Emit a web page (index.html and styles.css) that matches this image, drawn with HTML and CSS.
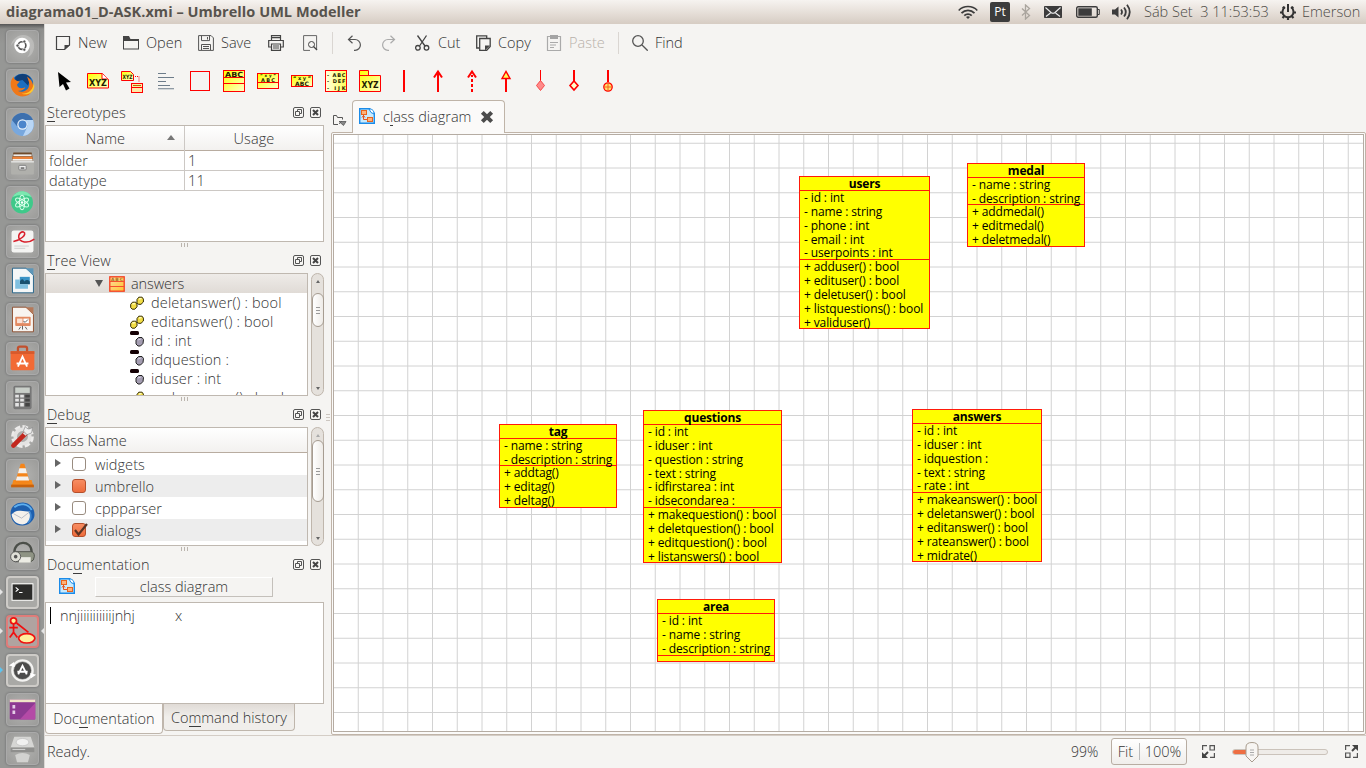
FILE: index.html
```html
<!DOCTYPE html>
<html lang="pt">
<head>
<meta charset="utf-8">
<title>diagrama01_D-ASK.xmi – Umbrello UML Modeller</title>
<link rel="stylesheet" href="styles.css">
</head>
<body>
<svg class="defs" width="0" height="0">
  <defs>
    <linearGradient id="yl" x1="0" y1="0" x2="1" y2="1"><stop offset="0" stop-color="#ff0"/><stop offset="1" stop-color="#ffc"/></linearGradient>
    <linearGradient id="yr" x1="0" y1="0" x2="1" y2="0"><stop offset="0" stop-color="#ffffe0"/><stop offset="1" stop-color="#ff5"/></linearGradient>
    <linearGradient id="or" x1="0" y1="0" x2="1" y2="1"><stop offset="0" stop-color="#ffd9a0"/><stop offset="1" stop-color="#ffc530"/></linearGradient>
    <symbol id="float" viewBox="0 0 11 11"><rect x=".5" y=".5" width="10" height="10" rx="1.5" fill="#f7f6f4" stroke="#555"/><path d="M4.5 4.5v-2h4v4h-2M2.500 4.500h4v4h-4z" fill="none" stroke="#555"/></symbol>
    <symbol id="close" viewBox="0 0 11 11"><rect x=".5" y=".5" width="10" height="10" rx="1.500" fill="#f7f6f4" stroke="#555"/><path d="M3 3l5 5M8 3l-5 5" stroke="#444" stroke-width="2"/></symbol>
    <symbol id="diag" viewBox="0 0 16 16"><path d="M.7.7h10l4.600 4.600v10H.7z" fill="#c9eafd" stroke="#1b8be8" stroke-width="1.400"/><path d="M10 1c4 0 5 2 5 5l-3-1.500z" fill="#fff" stroke="#1b8be8"/><rect x="2.500" y="2.500" width="5" height="4" fill="#ffb27a" stroke="#e8641e"/><rect x="8.500" y="9.500" width="5" height="4" fill="#ffb27a" stroke="#e8641e"/><path d="M4.500 7v4.500H8M3 9.500l1.500-2 1.500 2" fill="none" stroke="#e8541e"/></symbol>
    <symbol id="op" viewBox="0 0 14 14"><path d="M.7 8.300L2.500 6.200h3.300L7 8v2.800L4.800 13.200H2.200L.7 11.500zM7 3.500L8.800 1.200h3.300l1.300 1.900v2.900L11 8.300H8.400L7 6.800z" fill="#f2dd45" stroke="#332b00"/><path d="M2.500 8l2.500-.5M9 3l2.500-.6" stroke="#fffbc0" stroke-width="1.400"/></symbol>
    <symbol id="attr" viewBox="0 0 14 16"><rect x="0" y="0" width="9" height="4" rx="1.500" fill="#140004"/><path d="M6 9l2.500-2.500H12l1.500 2-.5 4L10.500 15H8l-2-2z" fill="#a39cb0" stroke="#222"/><path d="M8 9l3-1" stroke="#d6d0e0"/></symbol>
    <symbol id="cls" viewBox="0 0 16 16"><rect x=".8" y=".8" width="14.400" height="14.400" fill="url(#or)" stroke="#f53c1e" stroke-width="1.300"/><path d="M1 5.500h14M1 10.500h14" stroke="#f5502e"/><text x="2" y="4.800" font-size="4.500" textLength="12" class="pix soft">ABC</text></symbol>
  </defs>
</svg>

<header class="topbar">
  <div class="apptitle">diagrama01_D-ASK.xmi – Umbrello UML Modeller</div>
  <div class="tray">
    <svg width="20" height="16" viewBox="0 0 20 16" fill="none" stroke="#3c3c3c"><path d="M.7 6.500C5.500 1.300 14.500 1.300 19.300 6.500" stroke-width="1.500"/><path d="M3.500 9.200C7 5.500 13 5.500 16.500 9.200" stroke-width="1.700"/><path d="M6.300 11.600c2-2 5.400-2 7.400 0" stroke-width="1.700"/><path d="M8 13l2 2 2-2c-1-1-3-1-4 0z" fill="#3c3c3c" stroke="none"/></svg>
    <span class="lang">Pt</span>
    <svg width="10" height="16" viewBox="0 0 10 16" fill="none" stroke="#aaa59e" stroke-width="1.300"><path d="M1 4.500l7.500 7-4 3.500V1l4 3.500-7.500 7"/></svg>
    <svg width="18" height="12" viewBox="0 0 18 12"><rect width="18" height="12" rx=".8" fill="#3c3c3c"/><path d="M1.500 1.500L7 6.500q2 1.500 4 0l5.500-5M2 10.500L6.500 7M16 10.500L11.500 7" fill="none" stroke="#eee" stroke-width="1.100"/></svg>
    <svg width="24" height="12" viewBox="0 0 24 12"><rect x=".7" y=".7" width="20.600" height="10.600" rx="1.500" fill="none" stroke="#3c3c3c" stroke-width="1.400"/><rect x="2.300" y="2.300" width="13.500" height="7.500" fill="#3c3c3c"/><path d="M22 3.500h1.300v5H22" fill="none" stroke="#3c3c3c"/></svg>
    <svg width="20" height="16" viewBox="0 0 20 16"><path d="M0 5.500h3L6.500 2.500v11L3 10.500H0z" fill="#3c3c3c"/><path d="M9 5.500q2 2.500 0 5M12 3.500q3.600 4.500 0 9M15 .8q5.500 7.200 0 14.400" fill="none" stroke="#3c3c3c" stroke-width="1.800"/></svg>
    <span class="clock">Sáb Set&nbsp; 3 11:53:53</span>
    <svg width="16" height="16" viewBox="0 0 16 16" fill="none" stroke="#333"><path d="M5 3.200a5.500 5.500 0 1 0 6 0" stroke-width="2"/><path d="M8 0v8" stroke-width="2"/><path d="M2.800 2.800L4.500 4.500M13.200 2.800L11.500 4.500M0 8.500h2.500M13.500 8.500H16M2.500 14l1.700-1.700M13.500 14l-1.700-1.700M8 16v-2.500" stroke-width="2.200"/></svg>
    <span class="user">Emerson</span>
  </div>
</header>

<div class="desktop">
<nav class="launcher">
  <div class="tile"><svg viewBox="0 0 34 34"><path d="M4 17C6 6 16 2 24 6c9 5 7 20-2 23 6-6 4-18-5-19C11 10 6 12 4 17z" fill="#fff" opacity=".22"/><circle cx="16.500" cy="16" r="8.500" fill="#fff"/><circle cx="16.500" cy="16" r="4.200" fill="none" stroke="#555" stroke-width="1.800"/><g fill="#555" stroke="#fff" stroke-width=".8"><circle cx="11.500" cy="16" r="1.700"/><circle cx="19" cy="11.500" r="1.700"/><circle cx="19" cy="20.500" r="1.700"/></g></svg></div>
  <div class="tile"><svg viewBox="0 0 34 34"><circle cx="17" cy="16" r="12" fill="#1c6fc0"/><path d="M9 8c4-5 13-5 17 1l-3 8-6-6-8 2z" fill="#103f78"/><path d="M4 15c0-4 2-6 3-8l1 3 3 2 3 .500-3 3.500c0 4 5 5 9 3-1 4-8 4-8 4 8 3 14-3 12-10l-2-6c6 4 8 10 6 15-2 5-6 7-11 7C10 29 4 23 4 15z" fill="#f07818"/><path d="M29 12c1 9-5 14-13 14 7 2 13-1 14-8z" fill="#ffc92e"/></svg></div>
  <div class="tile"><svg viewBox="0 0 34 34"><circle cx="17" cy="17" r="12.500" fill="#78a8de"/><path d="M5.500 12C10 2 24 2 28.500 12H17l-6 7z" fill="#3d70ae"/><path d="M28.500 12c3 9-3 17-11 17.500L23 18l-2-6z" fill="#b9d6f5"/><circle cx="17" cy="17" r="5.700" fill="#eaf3fc"/><circle cx="17" cy="17" r="4.400" fill="#4b85cc"/></svg></div>
  <div class="tile"><svg viewBox="0 0 34 34"><path d="M7 5h20l2 10H5z" fill="#6e4a2b"/><path d="M7 7h20v2H7z" fill="#eee"/><path d="M6 9.500h22V12H6z" fill="#ef8136"/><path d="M6 12h22v2H6z" fill="#f5f3f0"/><rect x="4.500" y="14" width="25" height="15" rx="1" fill="#b0b0ac"/><rect x="4.500" y="14" width="25" height="2" fill="#dededc"/><rect x="13" y="19" width="8" height="5" rx="1" fill="#eee" stroke="#777"/><path d="M15 22h4" stroke="#555" stroke-width="1.500"/></svg></div>
  <div class="tile"><svg viewBox="0 0 34 34"><circle cx="16.500" cy="17" r="12" fill="#3fc98a"/><path d="M6 11c5-9 17-8 21 0-8-3-14-3-21 0z" fill="#7be8b0"/><g fill="none" stroke="#d5ffe8" stroke-width="1.100"><ellipse cx="16.500" cy="17" rx="2.800" ry="8"/><ellipse cx="16.500" cy="17" rx="2.800" ry="8" transform="rotate(60 16.500 17)"/><ellipse cx="16.500" cy="17" rx="2.800" ry="8" transform="rotate(120 16.500 17)"/></g><circle cx="16.500" cy="17" r="1.400" fill="#fff"/></svg></div>
  <div class="tile"><svg viewBox="0 0 34 34"><rect x="5" y="5" width="24" height="24" rx="2.500" fill="#f4f4f2"/><path d="M7 17C14 16 23 9 18 6.500c-5-1-9 9 1 11 4 .5 7 0 11-3" fill="none" stroke="#d8202c" stroke-width="1.700"/><path d="M8 22h16M8 24.500h12" stroke="#ccc"/></svg></div>
  <div class="tile"><svg viewBox="0 0 34 34"><path d="M6 3.500h15l8 8v19H6z" fill="#f4f7f8" stroke="#1e5f86"/><path d="M20 3.500h9v8z" fill="#5d96b8"/><rect x="14" y="13" width="11" height="8" fill="#3a93c6"/><path d="M14 18q3-5 5 0 3-3 6 0v3H14z" fill="#17506f"/><path d="M9 16h5v5h9v5H9z" fill="#7fc0e0"/></svg></div>
  <div class="tile"><svg viewBox="0 0 34 34"><path d="M6 3.500h15l8 8v19H6z" fill="#f8f4f0" stroke="#8b4a2b"/><path d="M20 3.500h9v8z" fill="#b5795a"/><rect x="9" y="14" width="17" height="10" rx="1" fill="#e28a62"/><rect x="11" y="16" width="6" height="5" fill="#fbe2d5"/><rect x="18" y="16" width="6" height="5" fill="#fff"/><path d="M18 19l2 1 3-3M17 24v4M13 28l2-3M22 28l-2-3" stroke="#555" fill="none"/></svg></div>
  <div class="tile"><svg viewBox="0 0 34 34"><path d="M12 11V6q0-2 2-2h6q2 0 2 2v5" fill="none" stroke="#c2502e" stroke-width="2.500"/><path d="M4 9h26v19q0 2-2 2H6q-2 0-2-2z" fill="#f26a35"/><path d="M4 9h26v3H4z" fill="#d65a2c"/><path d="M12 26l5-11 5 11M10.500 22.500h13" fill="none" stroke="#fff" stroke-width="2"/></svg></div>
  <div class="tile"><svg viewBox="0 0 34 34"><rect x="7" y="4" width="20" height="26" rx="2" fill="#777"/><rect x="9" y="6" width="16" height="6" fill="#c9cfc9"/><g fill="#e4e4e4"><path d="M9 14h4v3H9zM14.500 14h4v3h-4zM9 18.500h4v3H9zM14.500 18.500h4v3h-4zM9 23h4v4H9zM14.500 23h4v4h-4z"/></g><path d="M20 14h5v3h-5zM20 18.500h5v3h-5zM20 23h5v4h-5z" fill="#444"/></svg></div>
  <div class="tile"><svg viewBox="0 0 34 34"><circle cx="17" cy="17" r="10" fill="none" stroke="#ecebea" stroke-width="5" stroke-dasharray="5.500 2.300"/><circle cx="17" cy="17" r="8" fill="none" stroke="#e4e3e2" stroke-width="4"/><path d="M7 27L21 13" stroke="#c2271e" stroke-width="5" stroke-linecap="round"/><path d="M19 15l5-6" stroke="#ddd" stroke-width="4"/><path d="M20 6q3 5 8 1l-1 6-5 2-4-4z" fill="#eee" stroke="#888" stroke-width=".7"/></svg></div>
  <div class="tile"><svg viewBox="0 0 34 34"><path d="M7 22h20l2 7H5z" fill="#f58a1c"/><path d="M15 4h4l6 20q-8 4-16 0z" fill="#f5851a"/><path d="M13.500 9h7l1.500 5.500H12zM11 18h12l1.300 4.500H9.700z" fill="#f3f1ee"/><path d="M4.500 27h25v3h-25z" fill="#c9620c"/></svg></div>
  <div class="tile"><svg viewBox="0 0 34 34"><path d="M4 17C3 8 11 3 19 4c8 1 12 8 11 15-1 6-8 11-14 10C9 29 5 24 4 17z" fill="#1e5fae"/><path d="M5 17q4-5 10-4l10 1c3 6-1 13-8 14-6 0-11-4-12-11z" fill="#f4f1ec"/><path d="M7 16l9 5 9-7" fill="none" stroke="#b4b9c4"/><path d="M8 9c6-5 15-4 19 3" fill="none" stroke="#5fb0ee" stroke-width="2"/><path d="M25 14q3 7-2 12" fill="none" stroke="#3e86d0" stroke-width="2"/></svg></div>
  <div class="tile"><svg viewBox="0 0 34 34"><path d="M8 16C8 2 27 2 27 15v6" fill="none" stroke="#4b4f49" stroke-width="2.500"/><path d="M9 15h17q4 0 4 5t-4 6H9z" fill="#8f9484" stroke="#4a4d45"/><path d="M13 21h13v6H13z" fill="#ecece4"/><circle cx="9.500" cy="20.500" r="5.500" fill="#e0e0d8" stroke="#555"/><circle cx="9.500" cy="20.500" r="2" fill="#555"/></svg></div>
  <div class="tile running"><svg viewBox="0 0 34 34"><rect x="4" y="6" width="26" height="21" rx="1" fill="#e8e8e6"/><rect x="5.500" y="7.500" width="23" height="18" fill="#2c2c2a"/><path d="M9 11l3 2.500-3 2.500M13 17h4" fill="none" stroke="#fff" stroke-width="1.300"/></svg></div>
  <div class="tile active"><svg viewBox="0 0 34 34"><g fill="none" stroke="#f01010" stroke-width="2"><path d="M6.500 8v10l-4.500 6M6.500 18l4.500 6M1.500 12.500h10M10 7l14 11"/><circle cx="6.500" cy="4.500" r="3.500" fill="#fff39a"/><ellipse cx="22" cy="25" rx="9.500" ry="5.500" fill="#ffee9e"/></g></svg></div>
  <div class="tile running blue"><svg viewBox="0 0 34 34"><circle cx="17" cy="17" r="12" fill="none" stroke="#f3f3f1" stroke-width="2.500"/><circle cx="17" cy="17" r="10" fill="#4c4c4b"/><path d="M12 21.500l5-10 5 10M11 18.500h12" fill="none" stroke="#fff" stroke-width="2.200"/><path d="M1 11l6-4 1 6zM33 22l-6 4-1-6z" fill="#fff"/></svg></div>
  <div class="tile"><svg viewBox="0 0 34 34"><rect x="3" y="6" width="28" height="22" rx="1" fill="#8d3a92"/><path d="M14 28L31 10v18z" fill="#b44aa6"/><rect x="3" y="6" width="28" height="3" fill="#efe6c8"/><path d="M6 12h3v4H6zM6 18h3v4H6z" fill="#e5cde8"/></svg></div>
  <div class="tile"><svg viewBox="0 0 34 34"><path d="M8 4h18l4 12H4z" fill="#d6d6d4"/><ellipse cx="17" cy="10" rx="7" ry="4" fill="#f1f1f0" stroke="#bbb" stroke-width=".7"/><path d="M4 16h26v5H4z" fill="#8f8f8d"/><path d="M6 18h14" stroke="#ddd"/><path d="M9 24q8-4 16 0l-2 8H11z" fill="#d2d2d0"/></svg></div>
</nav>

<div class="window">
  <div class="toolbar main">
    <span class="tb"><svg viewBox="0 0 16 16"><path d="M1.500 1.500h13v8.500l-5 4.500h-8z" fill="none" stroke="#444" stroke-width="1.200"/><path d="M9.500 15v-5H15z" fill="#444"/></svg>New</span>
    <span class="tb"><svg viewBox="0 0 16 16"><path d="M0 14.500V1h6l1.500 3H16v10.500zM1 6v7.500h14V6z" fill="#444" fill-rule="evenodd"/></svg>Open</span>
    <span class="tb"><svg viewBox="0 0 16 16" fill="none" stroke="#555"><path d="M.6.600h12.500l2.300 2.300v12.500H.6zM3.500.600v5h8v-5M9.500 2v2.500M3.500 15V9.500h9V15M5 11.500h6M5 13.500h6"/></svg>Save</span>
    <span class="tb"><svg viewBox="0 0 16 16" fill="none" stroke="#444" stroke-width="1.200"><path d="M3.500 5V.700h9V5M3.500 2.700h9M3 12H.7V5.500h14.600V12H13M3.500 9h9v6.300h-9zM5 11h6M5 13h6"/></svg></span>
    <span class="tb"><svg viewBox="0 0 16 16" fill="none" stroke="#666"><path d="M8 15.400H1.600V.600h13V15"/><circle cx="9.500" cy="9.500" r="3" stroke="#444"/><path d="M11.500 11.500l3.500 3.500" stroke="#444" stroke-width="1.300"/></svg></span>
    <i class="sep"></i>
    <span class="tb"><svg viewBox="0 0 16 16" fill="none" stroke="#555" stroke-width="1.200"><path d="M5.500.800L1.500 4.500l4 3.700M1.500 4.500h6.500a5.400 5.400 0 0 1 0 10.800H7"/></svg></span>
    <span class="tb"><svg viewBox="0 0 16 16" fill="none" stroke="#aaa" stroke-width="1.200"><path d="M9.500.800l4 3.700-4 3.700M13.500 4.500H7a5.400 5.400 0 0 0 0 10.800h1"/></svg></span>
    <span class="tb"><svg viewBox="0 0 16 16" fill="none" stroke="#444" stroke-width="1.300"><path d="M2.500.5l7.500 10.500M11.500.500L4.500 11"/><circle cx="2.900" cy="12.800" r="2.300"/><circle cx="11.500" cy="12.800" r="2.300"/></svg>Cut</span>
    <span class="tb"><svg viewBox="0 0 16 16" fill="none" stroke="#444" stroke-width="1.300"><path d="M4 13H1.700V.800h10V3M4.700 3.500h10.500v8l-3.500 3.800h-7z"/><path d="M10 15.500v-5h5z" fill="#444" stroke="none"/></svg>Copy</span>
    <span class="tb off"><svg viewBox="0 0 16 16"><path d="M4 1.500H1.500v14h13v-14H12" fill="none" stroke="#aaa" stroke-width="1.200"/><rect x="4" y="0" width="8" height="4" fill="#a4a4a4"/><path d="M4 7.500h8M4 10h6M4 12.500h4" stroke="#aaa"/></svg>Paste</span>
    <i class="sep"></i>
    <span class="tb"><svg viewBox="0 0 16 16" fill="none" stroke="#555" stroke-width="1.300"><circle cx="6" cy="6" r="5.300"/><path d="M10 10l5.700 5.700"/></svg>Find</span>
  </div>
  <div class="toolbar tools">
    <svg viewBox="0 0 24 24"><path d="M6 3l13 10-5 .5 3.500 6-3.500 2-3-6.500L7.500 18z" fill="#000"/></svg>
    <svg viewBox="0 0 24 24"><path d="M1.500 4.500h15l6 6v8.500h-21z" fill="url(#yl)" stroke="red"/><path d="M16 4.500v5.500h6" fill="#fff" stroke="red"/><text class="pix" x="3" y="17" font-size="8.500" textLength="18" lengthAdjust="spacingAndGlyphs">XYZ</text></svg>
    <svg viewBox="0 0 24 24"><path d="M1.500 2.500h9l3 3v6h-12z" fill="url(#yl)" stroke="red"/><text class="pix" x="2.500" y="10" font-size="6" textLength="10" lengthAdjust="spacingAndGlyphs">XYZ</text><path d="M13 7.500h6v6" fill="none" stroke="red" stroke-dasharray="1 1"/><rect x="11.500" y="14.500" width="11" height="9" fill="#ffe9a8" stroke="red"/><path d="M12 18.500h10" stroke="red"/><path d="M13 16.500h8" stroke="#a70"/></svg>
    <svg viewBox="0 0 24 24"><path d="M4 4.500h8M4 8.500h16M4 12.500h8M4 16.500h12M4 19.800h16" stroke="#6d7c8a" stroke-width="1.100" fill="none"/></svg>
    <svg viewBox="0 0 24 24"><rect x="2.500" y="2.500" width="19" height="19" fill="none" stroke="red"/></svg>
    <svg viewBox="0 0 24 24"><rect x="1.500" y="1.500" width="21" height="21" fill="url(#yl)" stroke="red"/><path d="M2 8.500h20M2 14.500h20" stroke="red"/><text class="pix" x="3" y="7.600" font-size="7" textLength="18" lengthAdjust="spacingAndGlyphs">ABC</text></svg>
    <svg viewBox="0 0 24 24"><rect x="1.500" y="4.500" width="21" height="15" fill="url(#yl)" stroke="red"/><path d="M2 13.500h20" stroke="red"/><text class="pix" x="4" y="7.700" font-size="4" textLength="16">“xy”</text><text class="pix" x="5" y="12.700" font-size="5" textLength="14">ABC</text></svg>
    <svg viewBox="0 0 24 24"><rect x="1.500" y="6.500" width="21" height="11" fill="url(#yl)" stroke="red"/><text class="pix" x="3" y="10.600" font-size="5" textLength="18">“xy”</text><text class="pix" x="5" y="16.500" font-size="6" textLength="14">ABC</text></svg>
    <svg viewBox="0 0 24 24"><rect x="1.500" y="1.500" width="21" height="21" fill="url(#yr)" stroke="red"/><g class="pix" font-size="5"><text x="3" y="7.500" textLength="18.500">-&#160;ABC</text><text x="3" y="14" textLength="18.500">-&#160;DEF</text><text x="3" y="20.500" textLength="18.500">-&#160;IJK</text></g></svg>
    <svg viewBox="0 0 24 24"><path d="M1.500 1.500h9v5h12v16h-21z" fill="url(#yl)" stroke="red"/><path d="M2 6.500h9" stroke="red"/><text class="pix" x="3.500" y="19" font-size="8.500" textLength="17" lengthAdjust="spacingAndGlyphs">XYZ</text></svg>
    <svg viewBox="0 0 24 24"><path d="M12 1v22" stroke="red" stroke-width="2"/></svg>
    <svg viewBox="0 0 24 24"><path d="M12 2v21M8 8.500l4-6 4 6" stroke="red" stroke-width="2" fill="none"/></svg>
    <svg viewBox="0 0 24 24"><path d="M8 8.500l4-6 4 6M12 6v2M12 10v3M12 15v3M12 20v3" stroke="red" stroke-width="2" fill="none"/></svg>
    <svg viewBox="0 0 24 24"><path d="M12 9v14" stroke="red" stroke-width="2"/><path d="M8 9.500l4-7 4 7z" fill="#ff5" stroke="red" stroke-width="1.400"/></svg>
    <svg viewBox="0 0 24 24"><path d="M12.500 1v12" stroke="red"/><path d="M12.500 11.500l4 5-4 5-4-5z" fill="#ff8a8a" stroke="#f54a4a"/></svg>
    <svg viewBox="0 0 24 24"><path d="M12 1v11" stroke="red" stroke-width="2"/><path d="M12 12l4 4.500-4 4.500-4-4.500z" fill="#ffc" stroke="red" stroke-width="1.600"/></svg>
    <svg viewBox="0 0 24 24"><path d="M12 1v12" stroke="red" stroke-width="2"/><circle cx="12" cy="18" r="4.200" fill="#ffdf6b" stroke="red" stroke-width="1.300"/><path d="M12 14v8M8 18h8" stroke="#f86420"/></svg>
  </div>

  <div class="work">
    <aside class="dock">
      <div class="dtitle"><span><u>S</u>tereotypes</span><svg><use href="#float"/></svg><svg><use href="#close"/></svg></div>
      <div class="box stereo">
        <div class="row head"><span>Name<b class="up"></b></span><span>Usage</span></div>
        <div class="row"><span>folder</span><span>1</span></div>
        <div class="row"><span>datatype</span><span>11</span></div>
      </div>
      <div class="grip"><i></i><i></i><i></i></div>

      <div class="dtitle"><span><u>T</u>ree View</span><svg><use href="#float"/></svg><svg><use href="#close"/></svg></div>
      <div class="pane tree">
        <div class="box">
          <div class="item sel"><b class="down"></b><svg class="ci"><use href="#cls"/></svg>answers</div>
          <div class="item leaf"><svg><use href="#op"/></svg>deletanswer() : bool</div>
          <div class="item leaf"><svg><use href="#op"/></svg>editanswer() : bool</div>
          <div class="item leaf"><svg class="at"><use href="#attr"/></svg>id : int</div>
          <div class="item leaf"><svg class="at"><use href="#attr"/></svg>idquestion :</div>
          <div class="item leaf"><svg class="at"><use href="#attr"/></svg>iduser : int</div>
          <div class="item leaf"><svg><use href="#op"/></svg>makeanswer() : bool</div>
        </div>
        <div class="scroll"><b class="su"></b><div class="thumb t1"><i></i><i></i><i></i></div><b class="sd"></b></div>
      </div>
      <div class="grip"><i></i><i></i><i></i></div>

      <div class="dtitle"><span><u>D</u>ebug</span><svg><use href="#float"/></svg><svg><use href="#close"/></svg></div>
      <div class="pane debug">
        <div class="box">
          <div class="dhead">Class Name</div>
          <div class="drow"><b class="right"></b><i class="chk"></i>widgets</div>
          <div class="drow alt"><b class="right"></b><i class="chk on"></i>umbrello</div>
          <div class="drow"><b class="right"></b><i class="chk"></i>cppparser</div>
          <div class="drow alt"><b class="right"></b><i class="chk on"><svg viewBox="0 0 16 14"><path d="M3 7l3.500 4.500L15 1" fill="none" stroke="#5a3424" stroke-width="2.200"/></svg></i>dialogs</div>
        </div>
        <div class="scroll"><b class="su dim"></b><div class="thumb t2"><i></i><i></i><i></i></div><b class="sd"></b></div>
      </div>
      <div class="grip"><i></i><i></i><i></i></div>

      <div class="dtitle doc"><span>Doc<u>u</u>mentation</span><svg><use href="#float"/></svg><svg><use href="#close"/></svg></div>
      <div class="docname"><svg><use href="#diag"/></svg><div>class diagram</div></div>
      <div class="box text"><i class="caret"></i><span class="w1">nnjiiiiiiiiiijnhj</span><span>x</span></div>
      <div class="tabs"><div class="tab cur">Doc<u>u</u>mentation</div><div class="tab">Co<u>m</u>mand history</div></div>
    </aside>
    <div class="split"><i></i><i></i><i></i></div>

    <main class="view">
      <div class="vtabs">
        <svg class="newtab" viewBox="0 0 16 12"><path d="M6 10.500H1.500V1.500h3l1 2h5v2" fill="none" stroke="#555"/><path d="M7 7.500h7l-2.500 4zM10 7l-3 3" fill="#888" stroke="#555" stroke-width=".8"/></svg>
        <div class="vtab"><svg class="dg"><use href="#diag"/></svg><span>c<u>l</u>ass diagram</span><svg class="x" viewBox="0 0 12 12"><path d="M2 2l8 8M10 2l-8 8" stroke="#4c4c4c" stroke-width="3.400"/></svg></div>
      </div>
      <div class="frame">
        <div class="canvas" id="canvas">
          <svg class="grid" width="1030" height="597"><path id="gridlines" fill="none" stroke="#d2d2d2"/></svg>
          <section class="uml users"><h3>users</h3><ul class="a"><li>- id : int</li><li>- name : string</li><li>- phone : int</li><li>- email : int</li><li>- userpoints : int</li></ul><ul><li>+ adduser() : bool</li><li>+ edituser() : bool</li><li>+ deletuser() : bool</li><li>+ listquestions() : bool</li><li>+ validuser()</li></ul></section>
          <section class="uml medal"><h3>medal</h3><ul class="a"><li>- name : string</li><li>- description : string</li></ul><ul><li>+ addmedal()</li><li>+ editmedal()</li><li>+ deletmedal()</li></ul></section>
          <section class="uml tag"><h3>tag</h3><ul class="a"><li>- name : string</li><li>- description : string</li></ul><ul><li>+ addtag()</li><li>+ editag()</li><li>+ deltag()</li></ul></section>
          <section class="uml questions"><h3>questions</h3><ul class="a"><li>- id : int</li><li>- iduser : int</li><li>- question : string</li><li>- text : string</li><li>- idfirstarea : int</li><li>- idsecondarea :</li></ul><ul><li>+ makequestion() : bool</li><li>+ deletquestion() : bool</li><li>+ editquestion() : bool</li><li>+ listanswers() : bool</li></ul></section>
          <section class="uml answers"><h3>answers</h3><ul class="a"><li>- id : int</li><li>- iduser : int</li><li>- idquestion :</li><li>- text : string</li><li>- rate : int</li></ul><ul><li>+ makeanswer() : bool</li><li>+ deletanswer() : bool</li><li>+ editanswer() : bool</li><li>+ rateanswer() : bool</li><li>+ midrate()</li></ul></section>
          <section class="uml area"><h3>area</h3><ul class="a"><li>- id : int</li><li>- name : string</li><li>- description : string</li></ul><ul class="none"></ul></section>
        </div>
      </div>
    </main>
  </div>

  <footer class="status">
    <span class="ready">Ready.</span>
    <span class="pct">99%</span>
    <div class="zoomset"><span>Fit</span><span>100%</span></div>
    <svg class="z1" viewBox="0 0 13 13"><path d="M.6 5V.6H5M8 .600h4.400V5H8zM8 12.400h4.400V8" fill="none" stroke="#555" stroke-width="1.200"/><path d="M0 7v6h6z" fill="#444"/><path d="M2 11l4-4" stroke="#444" stroke-width="2"/></svg>
    <div class="slider"><i class="fill"></i><svg viewBox="0 0 14 21"><path d="M1 5q0-4.500 6-4.500T13 5v9l-6 6-6-6z" fill="#f7f5f2" stroke="#a89c8e"/><path d="M5 8h4M5 10.500h4M5 13h4" stroke="#aaa"/></svg></div>
    <svg class="z2" viewBox="0 0 13 13"><path d="M5 .600H.6V5M.6 8H5v4.400H.6zM8 12.400h4.400V8" fill="none" stroke="#555" stroke-width="1.200"/><path d="M7 0h6v6z" fill="#444"/><path d="M7 6l4-4" stroke="#444" stroke-width="2"/></svg>
  </footer>
</div>
</div>
<script src="script.js"></script>
</body>
</html>
```
FILE: styles.css
```css
* { box-sizing: border-box; }
body { margin: 0; width: 1366px; height: 768px; overflow: hidden; font-family: "Open Sans", "Noto Sans", sans-serif; font-weight: 300; font-size: 14.500px; letter-spacing: 0; color: #333; background: #f5f4f2; }
svg { display: block; flex: none; }
.defs { position: absolute; }
ul, h3 { margin: 0; padding: 0; list-style: none; }
u { text-decoration: none; border-bottom: 1px solid #3c3c3c; display: inline-block; line-height: 17px; }
.pix { font-family: "DejaVu Sans", sans-serif; font-weight: 700; fill: #221a00; letter-spacing: 0; }
.soft { fill: #a5701c; }

.topbar { height: 24px; display: flex; justify-content: space-between; align-items: center; background: linear-gradient(#f6f3f0, #eae4de 40%, #d6ccc3); }
.apptitle { padding: 0 0 2px 6px; font-size: 14.500px; font-weight: 700; color: #57534d; letter-spacing: 0.050px; }
.tray { display: grid; grid-template-columns: 32px 31px 23px 32px 36px 32px 136px 22px 64px; align-items: center; color: #4c4a46; }
.lang { width: 20px; height: 20px; border-radius: 2px; background: #3c3c3c; color: #fff; font-size: 12px; font-weight: 400; line-height: 20px; text-align: center; }
.clock, .user { padding-bottom: 2px; }

.desktop { display: flex; height: 744px; }
.launcher { width: 45px; padding: 6px 0 0 5.500px; display: flex; flex-direction: column; gap: 6px; overflow: hidden; background: linear-gradient(#555 0, #8e8e8c 5px, #969795 20px, #969795); border-right: 1px solid #dbd8d5; }
.tile { position: relative; flex: none; width: 33px; height: 33px; border-radius: 4px; background: radial-gradient(#b3b3b1, #9b9b99); border: 1px solid #aaa; box-shadow: 0 0 2px 1px #808080; }
.tile svg { width: 31px; height: 31px; }
.tile.running { border: 2px solid #cdcbc7; background: #a9a9a6; }
.tile.running svg, .tile.active svg { width: 29px; height: 29px; }
.tile.active { border: 2px solid #df7c79; background: #b0a3a0; }
.tile.running::before, .tile.active::before { content: ""; position: absolute; left: -8px; top: 11px; border: 3px solid transparent; border-left-color: #e5e5e5; }
.tile.blue::before { border-left-color: #5cc4f0; }
.tile.active::after { content: ""; position: absolute; right: -7px; top: 11px; border: 3px solid transparent; border-right-color: #e5e5e5; }

.window { flex: 1; display: flex; flex-direction: column; min-width: 0; }
.toolbar { height: 38px; display: grid; align-items: center; align-content: center; }
.toolbar.main { padding-left: 10px; grid-template-columns: 68px 75px 70px 34px 30px 15px 34px 34px 60px 71px 72px 14px 90px; }
.tb { display: flex; align-items: center; gap: 7px; line-height: 18px; padding-bottom: 1px; }
.tb svg { width: 16px; height: 16px; margin-top: 1px; }
.off { color: #b8b1aa; }
.sep { width: 1px; height: 22px; background: #dad6d2; }
.toolbar.tools { padding-left: 2px; grid-template-columns: repeat(17, 34px); justify-items: center; }
.toolbar.tools svg { width: 24px; height: 24px; }

.work { height: 635px; display: flex; }
.dock { width: 279px; display: flex; flex-direction: column; }
.dtitle { height: 25px; display: flex; align-items: center; gap: 6px; padding: 0 3px 0 2px; letter-spacing: 0.100px; }
.dtitle.doc { height: 24px; }
.dtitle span { flex: 1; }
.dtitle svg { width: 11px; height: 11px; }
.box { background: #fff; border: 1px solid #bfb8b0; overflow: hidden; }
.stereo { height: 117px; letter-spacing: 0.100px; }
.row { display: grid; grid-template-columns: 138px 1fr; height: 20px; line-height: 19px; border-bottom: 1px solid #ccc8c4; }
.row span { padding-left: 3px; }
.row span + span { border-left: 1px solid #ccc8c4; }
.row.head { height: 25px; line-height: 25px; text-align: center; background: linear-gradient(#fff, #f3f1ef); border-bottom-color: #b8aca0; }
.row.head span { position: relative; padding: 0 19px 0 0; }
.row.head span + span { padding: 0; }
.up { position: absolute; right: 9px; top: 9px; border: 4px solid transparent; border-top: 0; border-bottom: 5px solid #777; }
.grip { height: 6px; display: flex; justify-content: center; align-items: center; gap: 2px; }
.grip i { width: 1px; height: 4px; background: #bbb5ae; }
.pane { display: flex; justify-content: space-between; }
.pane .box { width: 263px; }
.tree { height: 123px; letter-spacing: 0.150px; }
.debug { height: 119px; letter-spacing: 0.050px; }
.item { height: 19px; display: flex; align-items: center; }
.item.sel { padding-left: 49px; background: linear-gradient(#eeebe8, #e0dbd6); letter-spacing: -0.100px; }
.down { border: 4px solid transparent; border-top: 7px solid #555; border-bottom: 0; margin-right: 6px; }
.item .ci { width: 16px; height: 16px; margin-right: 6px; }
.leaf { padding-left: 84px; }
.leaf svg { width: 14px; height: 14px; margin-right: 7px; }
.leaf .at { height: 16px; align-self: flex-start; }
.scroll { width: 13px; border: 1px solid #bfb6ac; border-radius: 7px; background: #e5e1dc; display: flex; flex-direction: column; align-items: center; }
.su, .sd { border: 2.500px solid transparent; }
.su { border-top: 0; border-bottom: 3px solid #666; margin-top: 6px; }
.su.dim { border-bottom-color: #aaa; }
.sd { border-bottom: 0; border-top: 3px solid #666; margin: auto 0 5px; }
.thumb { width: 12px; border: 1px solid #a69c91; border-radius: 6px; background: linear-gradient(90deg, #fff, #eeebe7); display: flex; flex-direction: column; justify-content: center; align-items: center; gap: 2px; }
.thumb i { width: 4px; height: 1px; background: #999; }
.t1 { margin-top: 10px; height: 34px; }
.t2 { margin-top: 3px; height: 62px; }
.dhead { height: 25px; line-height: 25px; padding-left: 4px; border-bottom: 1px solid #b8aca0; background: linear-gradient(#fff, #f3f1ef); }
.drow { height: 22px; display: flex; align-items: center; padding-left: 9px; }
.drow.alt { background: #ededed; }
.right { border: 4px solid transparent; border-left: 6px solid #666; border-right: 0; margin: -3px 11px 0 0; }
.chk { width: 14px; height: 14px; margin-right: 9px; border: 1px solid #998c80; border-radius: 3px; background: #fff; }
.chk.on { background: linear-gradient(#f78d62, #ee6c3c); border-color: #b5502c; }
.chk svg { width: 16px; height: 14px; margin: -1px 0 0 -1px; }
.docname { height: 26px; display: flex; padding-left: 14px; gap: 20px; }
.docname svg { width: 16px; height: 16px; margin-top: 2px; }
.docname div { width: 178px; height: 20px; margin-top: 1px; line-height: 18px; text-align: center; border: 1px solid #fff; border-right-color: #c4c0bb; border-bottom-color: #c4c0bb; }
.text { height: 102px; display: flex; padding: 4px; line-height: 18px; letter-spacing: -0.130px; }
.caret { width: 1px; height: 17px; background: #000; margin-right: 9px; }
.w1 { width: 115px; }
.tabs { display: flex; align-items: flex-start; }
.tab { height: 27px; line-height: 27px; width: 132px; text-align: center; border: 1px solid #bfb6ac; border-top: 0; border-radius: 0 0 4px 4px; background: linear-gradient(#e0dbd6, #f0eeeb 50%); }
.tab.cur { width: 118px; height: 30px; line-height: 29px; background: #fbfaf9; }
.split { width: 7px; display: flex; flex-direction: column; align-items: center; justify-content: center; gap: 2px; }
.split i { width: 4px; height: 1px; background: #ccc6c0; }

.view { flex: 1; display: flex; flex-direction: column; }
.vtabs { height: 32px; display: flex; padding-left: 1px; }
.newtab { width: 16px; height: 12px; margin: 14px 4px 0 0; }
.vtab { position: relative; height: 33px; width: 153px; padding-left: 6px; display: flex; align-items: center; border: 1px solid #bfb4a8; border-bottom: 0; border-radius: 4px 4px 0 0; background: #fbfaf9; z-index: 1; }
.vtab .dg { width: 16px; height: 16px; margin: 0 8px 2px 0; }
.vtab span { width: 97px; padding-bottom: 2px; }
.vtab .x { width: 14px; height: 14px; }
.frame { height: 603px; border: 1px solid #c0b4a8; border-radius: 2px; background: #fbfaf9; padding: 1px; }
.canvas { position: relative; height: 598px; border: 1px solid #b5aca3; background: #fff; overflow: hidden; }
.grid { position: absolute; left: 0; top: 0; }
.uml { position: absolute; background: #ff0; border: 1px solid #ff1a0a; color: #000; font-size: 12px; font-weight: 400; letter-spacing: -0.120px; line-height: 13.860px; white-space: nowrap; }
.uml h3 { font-size: 12px; line-height: 13px; height: 14px; text-align: center; border-bottom: 1px solid #ff1a0a; letter-spacing: -0.200px; }
.uml ul { padding-left: 4px; }
.uml .a { border-bottom: 1px solid #ff1a0a; }
.uml li { height: 13.860px; }
.uml .a li:last-child { height: 13px; }
.medal .a li:last-child, .tag .a li:last-child { height: 12px; }
.users { left: 465px; top: 41px; width: 131px; height: 153px; }
.medal { left: 633px; top: 28px; width: 118px; height: 84px; }
.tag { left: 165px; top: 289px; width: 118px; height: 84px; }
.questions { left: 309px; top: 275px; width: 139px; height: 153px; }
.answers { left: 578px; top: 274px; width: 130px; height: 153px; }
.area { left: 323px; top: 464px; width: 118px; height: 63px; }

.status { height: 33px; border-top: 1px solid #d4cdc6; display: flex; align-items: center; padding: 0 0 1px 2px; }
.ready { width: 1024px; }
.pct { width: 40px; font-size: 14px; }
.zoomset { width: 76px; height: 27px; display: flex; align-items: center; border: 1px solid #b8ada2; border-radius: 3px; background: linear-gradient(#fff, #f0eeeb); }
.zoomset span { width: 27px; text-align: center; }
.zoomset span + span { flex: 1; border-left: 1px solid #bbb; line-height: 17px; }
.z1 { width: 13px; height: 13px; margin: 0 17px 0 15px; }
.slider { position: relative; width: 96px; height: 6px; border: 1px solid #cbc3bb; border-radius: 3px; background: #efece8; }
.fill { display: block; width: 18px; height: 4px; border-radius: 2px; background: #ee6e42; }
.slider svg { position: absolute; left: 12px; top: -8px; width: 14px; height: 21px; }
.z2 { width: 13px; height: 13px; margin-left: 17px; }
```
FILE: script.js
```js
// Draws the snap grid: 25 units at 99% zoom.
const step = 24.75;
let d = "";
for (let x = -0.5 + step; x < 1030; x += step) d += `M${x} 0V597`;
for (let y = 8.25; y < 597; y += step) d += `M0 ${y}H1030`;
document.getElementById("gridlines").setAttribute("d", d);
```
